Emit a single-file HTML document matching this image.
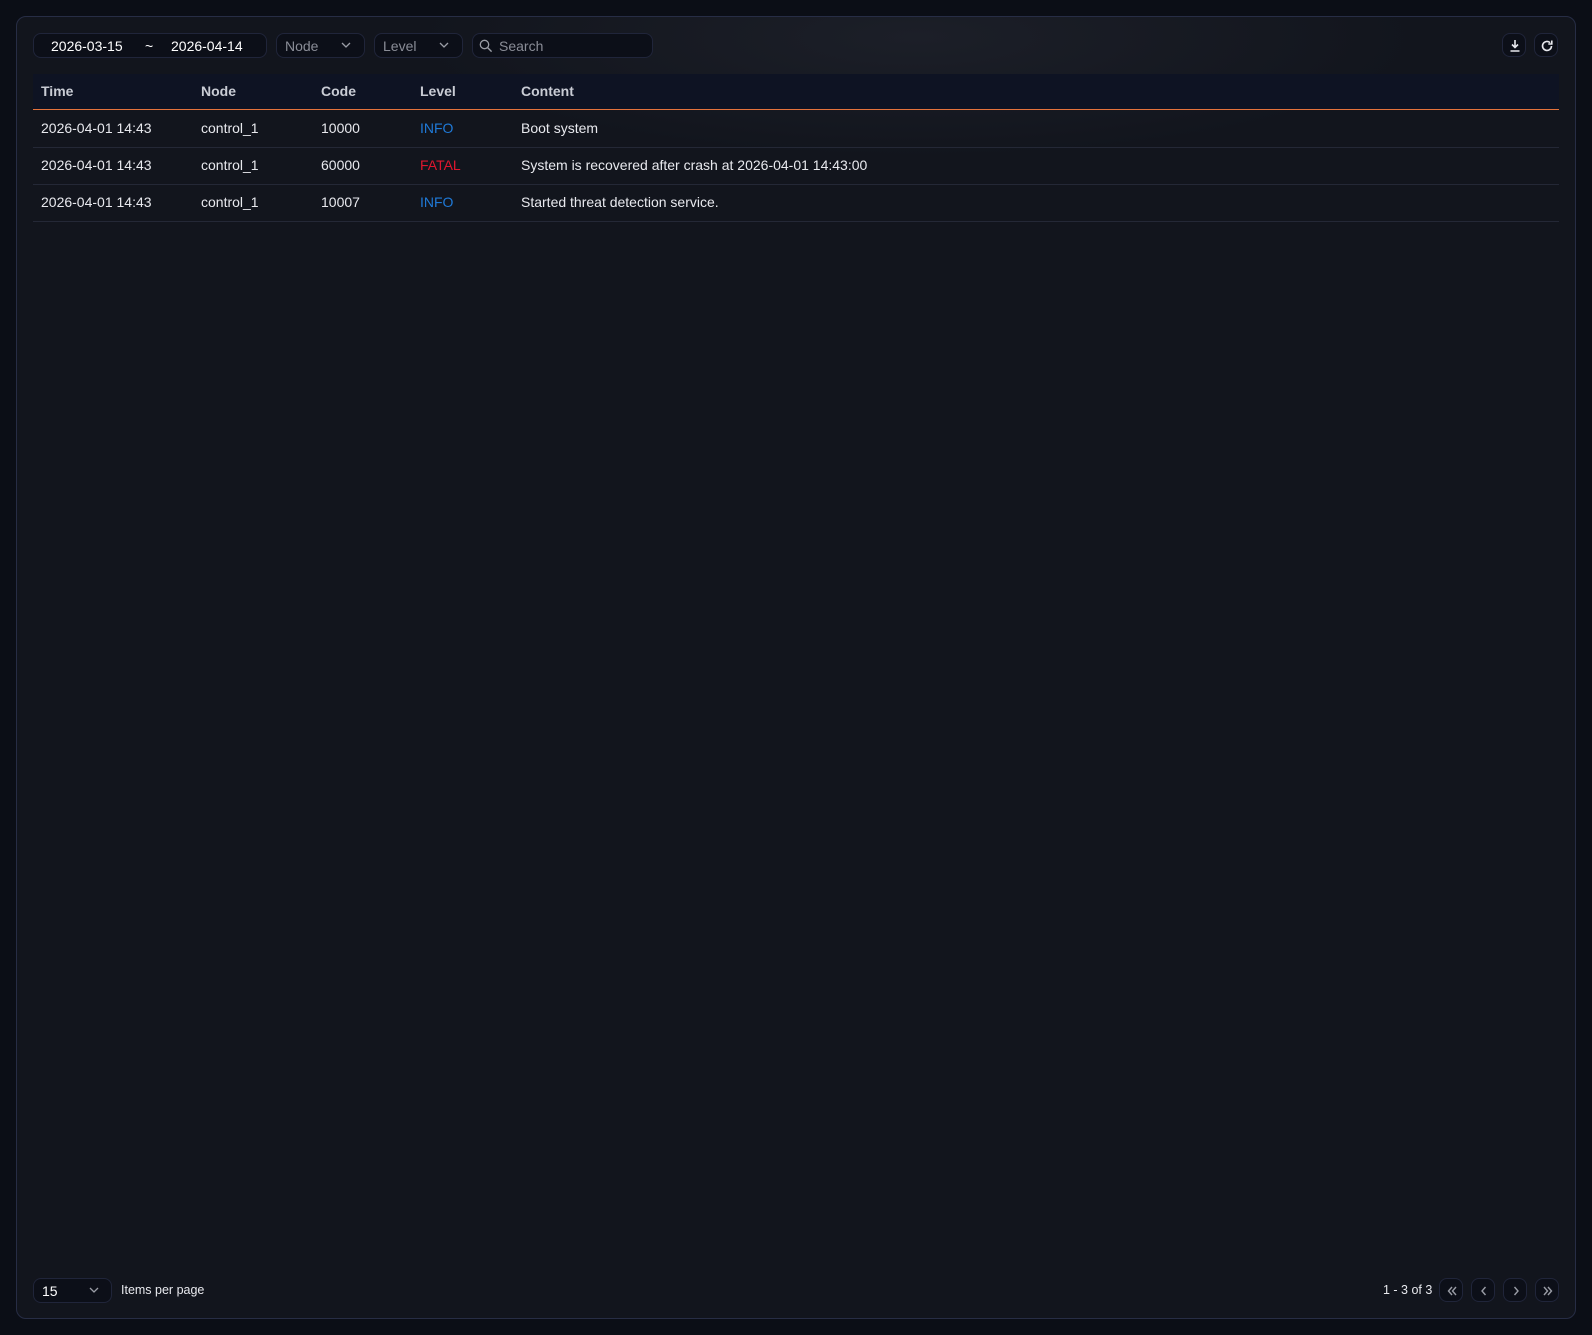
<!DOCTYPE html>
<html><head><style>
*{box-sizing:border-box;margin:0;padding:0}
body{width:1592px;height:1335px;background:#0b0e16;font-family:"Liberation Sans",sans-serif;font-size:14px;color:#e8e9ee;position:relative;overflow:hidden}
.panel{position:absolute;left:16px;top:16px;width:1560px;height:1303px;background:#12151d;border:1px solid #272d45;border-radius:10px;overflow:hidden;background:radial-gradient(ellipse 500px 120px at 900px 20px,#1c1f28,transparent),#12151d}
.box{position:absolute;top:16px;height:25px;border:1px solid #20253a;background:#0c0f18;border-radius:8px;color:#8a8d97}
.t{position:absolute;white-space:nowrap}
.row{position:absolute;left:16px;width:1526px;height:37px;border-bottom:1px solid #242836}
.row span{position:absolute;top:9px}
.hdr{position:absolute;left:16px;top:57px;width:1526px;height:36px;background:#0e1323;border-bottom:1.5px solid #e4733c;color:#c9ccd4;font-weight:bold}
.hdr span{position:absolute;top:9px}
.btn{position:absolute;width:24px;height:24px;border:1px solid #20253a;background:#0c0f18;border-radius:8px}
.btn svg{position:absolute;left:5px;top:5px}
</style></head><body>
<div class="panel">
 <div class="box" style="left:16px;width:234px;color:#fff"><span class="t" style="left:17px;top:4px">2026-03-15</span><span class="t" style="left:111px;top:4px">~</span><span class="t" style="left:137px;top:4px">2026-04-14</span></div>
 <div class="box" style="left:259px;width:89px"><span class="t" style="left:8px;top:4px">Node</span><svg style="position:absolute;left:64px;top:8px" width="10" height="7"><path d="M1 1l4 4 4-4" stroke="#9a9da6" fill="none" stroke-width="1.3"/></svg></div>
 <div class="box" style="left:357px;width:89px"><span class="t" style="left:8px;top:4px">Level</span><svg style="position:absolute;left:64px;top:8px" width="10" height="7"><path d="M1 1l4 4 4-4" stroke="#9a9da6" fill="none" stroke-width="1.3"/></svg></div>
 <div class="box" style="left:455px;width:181px"><svg style="position:absolute;left:6px;top:5px" width="14" height="14"><circle cx="5.5" cy="5.5" r="4.2" stroke="#9a9da6" fill="none" stroke-width="1.3"/><path d="M8.6 8.6l4 4" stroke="#9a9da6" stroke-width="1.4"/></svg><span class="t" style="left:26px;top:4px">Search</span></div>
 <div class="btn" style="left:1485px;top:16px"><svg width="14" height="14"><path d="M7 1v7M4 5.5l3 3 3-3M2.5 12h9" stroke="#e8e9ee" stroke-width="1.6" fill="none"/></svg></div>
 <div class="btn" style="left:1517px;top:16px"><svg width="14" height="14"><path d="M11.5 7a4.5 4.5 0 1 1-1.4-3.3" stroke="#e8e9ee" stroke-width="1.6" fill="none"/><path d="M11.8 1.5v3.5h-3.5" stroke="#e8e9ee" stroke-width="1.6" fill="none"/></svg></div>
 <div class="hdr"><span style="left:8px">Time</span><span style="left:168px">Node</span><span style="left:288px">Code</span><span style="left:387px">Level</span><span style="left:488px">Content</span></div>
 <div class="row" style="top:94px"><span style="left:8px">2026-04-01 14:43</span><span style="left:168px">control_1</span><span style="left:288px">10000</span><span style="left:387px;color:#1f7ad8">INFO</span><span style="left:488px">Boot system</span></div>
 <div class="row" style="top:131px"><span style="left:8px">2026-04-01 14:43</span><span style="left:168px">control_1</span><span style="left:288px">60000</span><span style="left:387px;color:#e0162e">FATAL</span><span style="left:488px">System is recovered after crash at 2026-04-01 14:43:00</span></div>
 <div class="row" style="top:168px"><span style="left:8px">2026-04-01 14:43</span><span style="left:168px">control_1</span><span style="left:288px">10007</span><span style="left:387px;color:#1f7ad8">INFO</span><span style="left:488px">Started threat detection service.</span></div>
 <div class="box" style="left:16px;top:1261px;width:79px;color:#fff"><span class="t" style="left:8px;top:4px">15</span><svg style="position:absolute;left:55px;top:8px" width="10" height="7"><path d="M1 1l4 4 4-4" stroke="#9a9da6" fill="none" stroke-width="1.3"/></svg></div>
 <span class="t" style="left:104px;top:1266px;font-size:12.5px">Items per page</span>
 <span class="t" style="left:1366px;top:1266px;font-size:12.5px">1 - 3 of 3</span>
 <div class="btn" style="left:1422px;top:1261px"><svg width="14" height="14"><path d="M7 3L3.5 7 7 11M11 3L7.5 7 11 11" stroke="#9a9da6" stroke-width="1.4" fill="none"/></svg></div>
 <div class="btn" style="left:1454px;top:1261px"><svg width="14" height="14"><path d="M8.5 3L5 7l3.5 4" stroke="#9a9da6" stroke-width="1.4" fill="none"/></svg></div>
 <div class="btn" style="left:1486px;top:1261px"><svg width="14" height="14"><path d="M5.5 3L9 7l-3.5 4" stroke="#9a9da6" stroke-width="1.4" fill="none"/></svg></div>
 <div class="btn" style="left:1518px;top:1261px"><svg width="14" height="14"><path d="M3 3l3.5 4L3 11M7 3l3.5 4L7 11" stroke="#9a9da6" stroke-width="1.4" fill="none"/></svg></div>
</div>
</body></html>
